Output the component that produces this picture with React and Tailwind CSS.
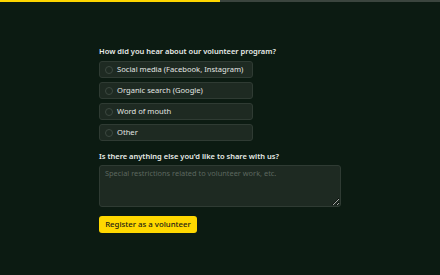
export default function App() {
  const options = [
    'Social media (Facebook, Instagram)',
    'Organic search (Google)',
    'Word of mouth',
    'Other',
  ];

  return (
    <div
      className="w-[440px] h-[275px] bg-[#0c1b12] overflow-hidden"
      style={{ fontFamily: '"Noto Sans", "DejaVu Sans", sans-serif' }}
    >
      {/* progress */}
      <div className="flex h-[2px]">
        <div className="w-1/2 bg-[#ffd600]" />
        <div className="w-1/2 bg-[#3b453e]" />
      </div>

      <div className="pl-[99px] pt-[43px]">
        <p className="text-[7.5px] leading-[12px] font-semibold text-[#e8ebe8]">
          How did you hear about our volunteer program?
        </p>
        <div className="mt-[4px] flex flex-col gap-[4px]">
          {options.map((o) => (
            <label
              key={o}
              className="w-[154px] h-[17px] flex items-center gap-[4px] pl-[5px] rounded-[3px] bg-[#1e2a22] border border-[#2f3b33]"
            >
              <span className="w-[8px] h-[8px] shrink-0 rounded-full border border-[#3c4840]" />
              <span className="text-[7.6px] leading-none whitespace-nowrap text-[#e3e6e3]">{o}</span>
            </label>
          ))}
        </div>

        <p className="mt-[9px] text-[7.5px] leading-[12px] font-semibold text-[#e8ebe8]">
          Is there anything else you'd like to share with us?
        </p>
        <textarea
          className="mt-[3px] block w-[242px] h-[42px] rounded-[3px] bg-[#1e2a22] border border-[#2f3b33] px-[5px] py-[2px] text-[7.4px] text-[#e3e6e3] placeholder:text-[#5c675f] outline-none resize-y"
          placeholder="Special restrictions related to volunteer work, etc."
        />

        <button className="mt-[9px] block h-[17px] w-[98px] rounded-[3px] bg-[#ffd800] text-[7.8px] font-medium text-[#1c1c14]">
          Register as a volunteer
        </button>
      </div>
    </div>
  );
}
